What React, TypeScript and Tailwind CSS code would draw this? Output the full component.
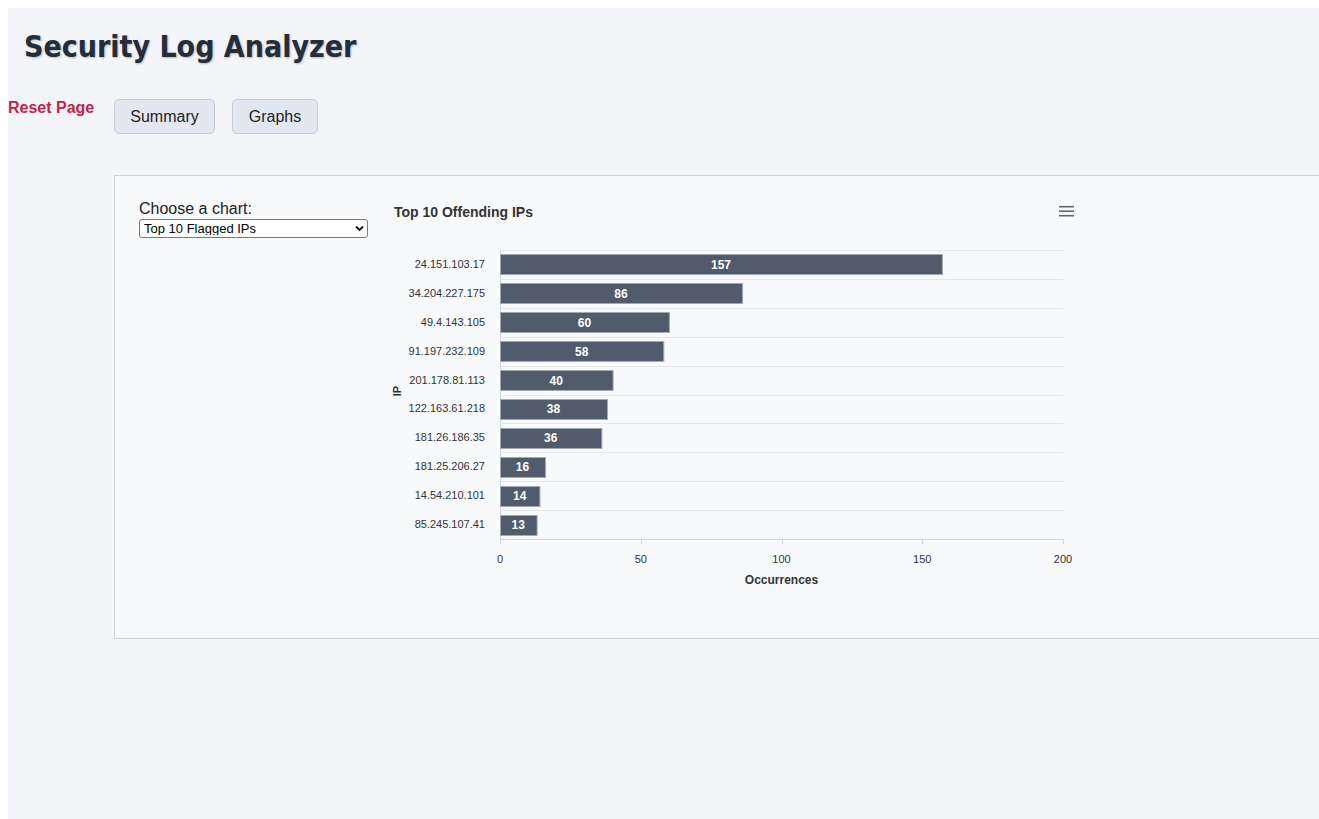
import React, { useState } from 'react';

const data = [
  { ip: '24.151.103.17', count: 157 },
  { ip: '34.204.227.175', count: 86 },
  { ip: '49.4.143.105', count: 60 },
  { ip: '91.197.232.109', count: 58 },
  { ip: '201.178.81.113', count: 40 },
  { ip: '122.163.61.218', count: 38 },
  { ip: '181.26.186.35', count: 36 },
  { ip: '181.25.206.27', count: 16 },
  { ip: '14.54.210.101', count: 14 },
  { ip: '85.245.107.41', count: 13 },
];

const X0 = 116;
const X1 = 679;
const Y0 = 50;
const ROW = 28.9;
const MAX = 200;
const scale = (v: number) => X0 + ((X1 - X0) * v) / MAX;

const BarChart: React.FC = () => {
  const yBottom = Y0 + ROW * data.length;
  return (
    <svg width={700} height={414} className="block shrink-0" style={{ fontFamily: '"Liberation Sans", Arial, sans-serif' }}>
      <text x={10} y={17} fontSize={14} fontWeight="bold" fill="#333333">
        Top 10 Offending IPs
      </text>

      {/* export menu */}
      <g stroke="#666666" strokeWidth={1.6}>
        <line x1={675} x2={690} y1={6.7} y2={6.7} />
        <line x1={675} x2={690} y1={11.2} y2={11.2} />
        <line x1={675} x2={690} y1={15.7} y2={15.7} />
      </g>

      {/* grid */}
      {Array.from({ length: data.length + 1 }).map((_, i) => (
        <line
          key={i}
          x1={X0}
          x2={X1}
          y1={Math.round(Y0 + i * ROW) + 0.5}
          y2={Math.round(Y0 + i * ROW) + 0.5}
          stroke="#e6e6e6"
          strokeWidth={1}
        />
      ))}
      <line x1={X0 + 0.5} x2={X0 + 0.5} y1={Y0} y2={yBottom} stroke="#ccd6eb" />
      <line x1={X0} x2={X1} y1={Math.round(yBottom) + 0.5} y2={Math.round(yBottom) + 0.5} stroke="#ccd6eb" />
      {[0, 50, 100, 150, 200].map((t) => (
        <g key={t}>
          <line
            x1={Math.round(scale(t)) + 0.5}
            x2={Math.round(scale(t)) + 0.5}
            y1={yBottom}
            y2={yBottom + 5}
            stroke="#ccd6eb"
          />
          <text x={scale(t)} y={363} fontSize={11} fill="#333333" textAnchor="middle">
            {t}
          </text>
        </g>
      ))}

      {/* bars */}
      {data.map((d, i) => {
        const cy = Y0 + i * ROW + ROW / 2;
        const w = scale(d.count) - X0;
        return (
          <g key={d.ip}>
            <text x={101} y={cy + 3.5} fontSize={11} fill="#333333" textAnchor="end">
              {d.ip}
            </text>
            <rect x={X0 + 0.5} y={Math.round(cy - 10) + 0.5} width={w} height={20} fill="#525b6b" stroke="#a3a8b1" strokeWidth={1} />
            <text
              x={X0 + w / 2}
              y={cy + 4.5}
              fontSize={12}
              fontWeight="bold"
              fill="#ffffff"
              textAnchor="middle"
            >
              {d.count}
            </text>
          </g>
        );
      })}

      <text
        x={17}
        y={191}
        fontSize={11}
        fontWeight="bold"
        fill="#333333"
        textAnchor="middle"
        transform="rotate(-90 17 191)"
      >
        IP
      </text>
      <text x={(X0 + X1) / 2} y={384} fontSize={12} fontWeight="bold" fill="#333333" textAnchor="middle">
        Occurrences
      </text>
    </svg>
  );
};

export default function App() {
  const [chart, setChart] = useState('top10');

  return (
    <div className="min-h-screen bg-white pt-2 pl-2 overflow-hidden font-['Liberation_Sans',Arial,sans-serif] text-[#222222]">
      <div className="bg-[#f4f5f9] min-h-[811px] pt-6">
        <h1 className="pl-4 text-[30px] leading-none font-bold text-[#252d3b] font-['DejaVu_Sans_Condensed','DejaVu_Sans',Verdana,sans-serif] font-stretch-condensed [text-shadow:1px_1px_2px_rgba(0,0,0,0.25)]">
          Security Log Analyzer
        </h1>

        <div className="mt-[37px] flex items-start">
          <a className="w-[106px] -mt-[3px] text-base font-bold text-[#c81e4a] cursor-pointer">Reset Page</a>
          <div className="flex gap-[17px]">
            <button className="h-[35px] w-[101px] rounded-[5px] border border-[#c5ccd8] bg-[#e2e7f0] text-base text-[#222222]">
              Summary
            </button>
            <button className="h-[35px] w-[86px] rounded-[5px] border border-[#c5ccd8] bg-[#e2e7f0] text-base text-[#222222]">
              Graphs
            </button>
          </div>
        </div>

        <div className="mt-[41px] ml-[106px] w-[1260px] border border-[#d2d4d9] bg-[#f8f9fb] px-6 py-6 flex gap-4">
          <div className="w-[229px] shrink-0">
            <label className="block text-base leading-[18px] text-[#222222]">Choose a chart:</label>
            <div className="relative mt-[1px]">
              <select
                value={chart}
                onChange={(e) => setChart(e.target.value)}
                className="block w-full h-[19px] appearance-none rounded-[3px] border border-[#7a7a7a] bg-white pl-1 text-[13px] leading-none text-black"
              >
                <option value="top10">Top 10 Flagged IPs</option>
                <option value="hourly">Events per Hour</option>
                <option value="types">Event Types</option>
              </select>
              <svg className="pointer-events-none absolute right-[4px] top-[6px]" width="9" height="7" viewBox="0 0 9 7">
                <path d="M1 1.5 L4.5 5 L8 1.5" fill="none" stroke="#111" strokeWidth="1.8" />
              </svg>
            </div>
          </div>
          <BarChart />
        </div>
      </div>
    </div>
  );
}
